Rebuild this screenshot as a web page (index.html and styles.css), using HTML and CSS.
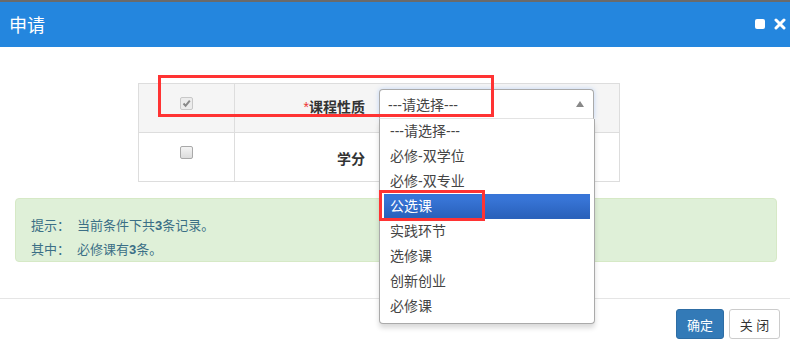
FILE: index.html
```html
<!DOCTYPE html>
<html>
<head>
    <title>申请</title>
    <link rel="stylesheet" href="styles.css">
</head>
<body>
    <div class="top-strip"></div>
    <div class="modal-header">
        <span class="modal-title">申请</span>
        <div class="header-tools">
            <span class="tool-max"></span>
            <svg class="tool-close" width="12" height="12" viewBox="0 0 12 12">
                <path d="M2 2 L10 10 M10 2 L2 10" stroke="#fff" stroke-width="3" stroke-linecap="round"/>
            </svg>
        </div>
    </div>

    <div class="modal-body">
        <div class="cond-table">
            <div class="cell cell-check row-a">
                <span class="fake-check checked disabled">
                    <svg width="9" height="9" viewBox="0 0 9 9"><path d="M1.5 4.5 L3.6 6.8 L7.8 1.6" stroke="#888" stroke-width="2" fill="none"/></svg>
                </span>
            </div>
            <div class="cell cell-label row-a"><span class="required">*</span>课程性质</div>
            <div class="cell cell-value row-a">
                <div class="chosen">
                    <div class="chosen-single">
                        <span>---请选择---</span>
                        <b class="arrow-up"></b>
                    </div>
                    <div class="chosen-drop">
                        <ul class="chosen-results">
                            <li>---请选择---</li>
                            <li>必修-双学位</li>
                            <li>必修-双专业</li>
                            <li class="highlighted">公选课</li>
                            <li>实践环节</li>
                            <li>选修课</li>
                            <li>创新创业</li>
                            <li>必修课</li>
                        </ul>
                    </div>
                </div>
            </div>

            <div class="cell cell-check row-b">
                <span class="fake-check"></span>
            </div>
            <div class="cell cell-label row-b">学分</div>
            <div class="cell cell-value row-b"></div>
        </div>

        <div class="alert">
            <p><span class="tip-key">提示：</span>当前条件下共<b>3</b>条记录。</p>
            <p><span class="tip-key">其中：</span>必修课有<b>3</b>条。</p>
        </div>
    </div>

    <div class="modal-footer">
        <button class="btn btn-primary">确定</button>
        <button class="btn btn-default">关 闭</button>
    </div>

    <!-- annotation boxes drawn over the screenshot -->
    <div class="mark mark-field"></div>
    <div class="mark mark-option"></div>
</body>
</html>
```

FILE: styles.css
```css
body {
    margin: 0;
    padding: 0;
    font-family: "Liberation Sans", "Noto Sans CJK SC", sans-serif;
    font-size: 14px;
    color: #333;
    background: #fff;
    width: 790px;
    height: 345px;
    overflow: hidden;
    position: relative;
}

.top-strip {
    height: 2px;
    background: #6a6a6a;
}

.modal-header {
    height: 45px;
    background: #2486de;
    display: flex;
    align-items: center;
    justify-content: space-between;
    padding: 0 4px 0 9px;
}

.modal-title {
    color: #fff;
    font-size: 18px;
    margin-top: -2px;
}

.header-tools {
    display: flex;
    align-items: center;
    gap: 9px;
    margin-top: -1px;
}

.tool-max {
    width: 10px;
    height: 10px;
    background: #fff;
    border-radius: 2px;
}

.tool-close {
    display: block;
}

.modal-body {
    padding: 36px 13px 0 15px;
}

.cond-table {
    margin-left: 123px;
    width: 482px;
    display: grid;
    grid-template-columns: 96px 137px 248px;
    grid-template-rows: 49px 49px;
    border-top: 1px solid #ddd;
    border-left: 1px solid #ddd;
    box-sizing: border-box;
}

.cell {
    border-bottom: 1px solid #ddd;
    border-right: 1px solid #ddd;
    box-sizing: border-box;
}

.row-a {
    background: #f5f5f5;
}

.cell-label {
    border-right: none;
    text-align: right;
    font-weight: bold;
    padding-right: 7px;
    color: #333;
}

.row-a.cell-label {
    padding-top: 12px;
}

.row-b.cell-label {
    padding-top: 15px;
}

.required {
    color: #e33;
    font-weight: normal;
}

.cell-check {
    display: flex;
    justify-content: center;
    padding-top: 13px;
}

.fake-check {
    width: 11px;
    height: 11px;
    border: 1px solid #a9a9a9;
    border-radius: 2px;
    background: linear-gradient(#f4f4f4, #dcdcdc);
    display: flex;
    align-items: center;
    justify-content: center;
}

.fake-check.disabled {
    border-color: #c8c8c8;
    background: #ececec;
}

.cell-value {
    padding: 5px 0 0 7px;
}

.chosen {
    position: relative;
    width: 215px;
}

.chosen-single {
    height: 30px;
    box-sizing: border-box;
    border: 1px solid #aaa;
    border-bottom-color: #e4e4e4;
    border-radius: 4px 4px 0 0;
    background: #fff;
    box-shadow: 0 0 5px rgba(88, 151, 251, 0.35);
    display: flex;
    align-items: center;
    justify-content: space-between;
    padding: 0 9px 0 8px;
    color: #444;
}

.arrow-up {
    width: 0;
    height: 0;
    border-left: 4px solid transparent;
    border-right: 4px solid transparent;
    border-bottom: 6px solid #888;
}

.chosen-drop {
    position: absolute;
    top: 30px;
    left: 0;
    width: 216px;
    box-sizing: border-box;
    background: #fff;
    border: 1px solid #aaa;
    border-top: 0;
    border-radius: 0 0 4px 4px;
    box-shadow: 0 4px 5px rgba(0, 0, 0, 0.15);
    z-index: 5;
}

.chosen-results {
    list-style: none;
    margin: 0 4px 4px 0;
    padding: 0 0 0 4px;
}

.chosen-results li {
    padding: 5px 6px;
    line-height: 15px;
    color: #444;
}

.chosen-results li.highlighted {
    background: linear-gradient(#3875d7 20%, #2a62bc 90%);
    color: #fff;
}

.alert {
    margin-top: 16px;
    height: 64px;
    box-sizing: border-box;
    background: #dff0d8;
    border: 1px solid #d6e9c6;
    border-radius: 4px;
    padding: 15px 15px;
    color: #3b6f86;
    font-size: 13px;
}

.alert p {
    margin: 0;
    line-height: 24px;
}

.tip-key {
    margin-right: 7px;
}

.modal-footer {
    margin-top: 36px;
    border-top: 1px solid #e5e5e5;
    display: flex;
    justify-content: flex-end;
    gap: 5px;
    padding: 10px 10px 0 0;
}

.btn {
    height: 30px;
    font-family: "Liberation Sans", "Noto Sans CJK SC", sans-serif;
    font-size: 13px;
    border-radius: 3px;
    padding: 0;
    white-space: nowrap;
    border: 1px solid transparent;
}

.btn-primary {
    background: #337ab7;
    border-color: #2e6da4;
    color: #fff;
    width: 48px;
}

.btn-default {
    background: #fff;
    border-color: #ccc;
    color: #333;
    width: 51px;
}

.mark {
    position: absolute;
    border: 3px solid #ff3333;
    box-sizing: border-box;
    z-index: 10;
}

.mark-field {
    left: 158px;
    top: 75px;
    width: 336px;
    height: 42px;
}

.mark-option {
    left: 379px;
    top: 190px;
    width: 106px;
    height: 31px;
}
```
